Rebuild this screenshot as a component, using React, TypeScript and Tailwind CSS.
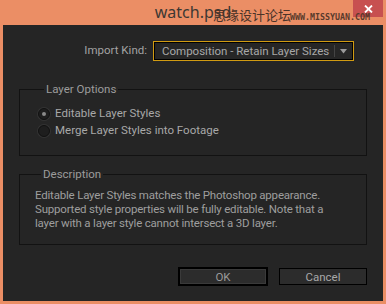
import React from "react";

const font = "font-['Roboto','Noto_Sans',sans-serif]";

function Radio({ checked, label }: { checked?: boolean; label: string }) {
  return (
    <label className="flex items-center gap-[5px] h-[17px]">
      <span className="w-[12px] h-[12px] rounded-full border border-[#111] bg-[#1e1e1e] flex items-center justify-center shadow-[0_0_0_1px_#333]">
        {checked && <span className="w-[4px] h-[4px] rounded-full bg-[#8a8a8a]" />}
      </span>
      <span>{label}</span>
    </label>
  );
}

export default function App() {
  return (
    <div className={`w-[386px] h-[304px] bg-[#eb8e65] flex flex-col ${font}`}>
      {/* title bar */}
      <div className="relative h-[25px] flex justify-center items-start">
        <span className="text-[16px] leading-[24px] text-[#3c3833] font-['Noto_Sans',sans-serif]">watch.psd</span>
        <button className="absolute right-[3px] top-0 w-[30px] h-[17px] bg-[#c75050] flex items-center justify-center">
          <svg width="9" height="8" viewBox="0 0 9 8">
            <path d="M1 0.5 L8 7.5 M8 0.5 L1 7.5" stroke="#fff" strokeWidth="1.8" />
          </svg>
        </button>
        <span className="absolute left-[213px] top-[7px] text-[13px] leading-[15px] text-[#4b3328] font-['Noto_Sans_CJK_SC',sans-serif]">
          思缘设计论坛
        </span>
        <span className="absolute left-[290px] top-[12px] text-[8.3px] leading-[10px] font-bold text-[#5a3a2c] font-['DejaVu_Sans_Mono',monospace]">
          WWW.MISSYUAN.COM
        </span>
      </div>

      {/* dialog body */}
      <div className="flex-1 mx-[3px] mb-[3px] bg-[#252525] text-[11.5px] text-[#a8a8a8] px-[16px] pt-[16px] flex flex-col">
        <div className="flex justify-end items-center gap-[6px] pr-[13px]">
          <span className="text-[#a3a3a3]">Import Kind:</span>
          <div className="w-[201px] h-[20px] border border-[#d19b12] bg-black p-px">
            <div className="h-full bg-[#262626] flex items-center pl-[7px]">
              <span className="flex-1 leading-[16px] whitespace-nowrap">Composition - Retain Layer Sizes</span>
              <span className="w-px h-[12px] bg-[#111] border-r border-[#444]" />
              <span className="w-[17px] flex justify-center">
                <svg width="7" height="5" viewBox="0 0 7 5">
                  <path d="M0 0 H7 L3.5 4.5 Z" fill="#9a9a9a" />
                </svg>
              </span>
            </div>
          </div>
        </div>

        <fieldset className="mt-[20px] h-[75px] border border-[#121212] px-[18px] pb-[8px]">
          <legend className="ml-[6px] px-[2px] leading-[16px] text-[#9c9c9c]">Layer Options</legend>
          <div className="pt-[8px] flex flex-col">
            <Radio checked label="Editable Layer Styles" />
            <Radio label="Merge Layer Styles into Footage" />
          </div>
        </fieldset>

        <fieldset className="mt-[10px] h-[79px] border border-[#121212] px-[15px]">
          <legend className="ml-[6px] px-[2px] leading-[16px] text-[#9c9c9c]">Description</legend>
          <p className="pt-[6px] leading-[14px] tracking-[-0.2px] text-[#9e9e9e]">
            Editable Layer Styles matches the Photoshop appearance.
            <br />
            Supported style properties will be fully editable. Note that a
            <br />
            layer with a layer style cannot intersect a 3D layer.
          </p>
        </fieldset>

        <div className="mt-[22px] flex justify-end gap-[11px]">
          <button className="w-[90px] h-[19px] border-2 border-black bg-[#2c2c2c] text-[#9a9a9a] leading-[14px] shadow-[inset_0_0_0_1px_#3a3a3a]">
            OK
          </button>
          <button className="w-[88px] h-[17px] mt-px border border-black bg-[#2c2c2c] text-[#a8a8a8] leading-[14px]">
            Cancel
          </button>
        </div>
      </div>
    </div>
  );
}
